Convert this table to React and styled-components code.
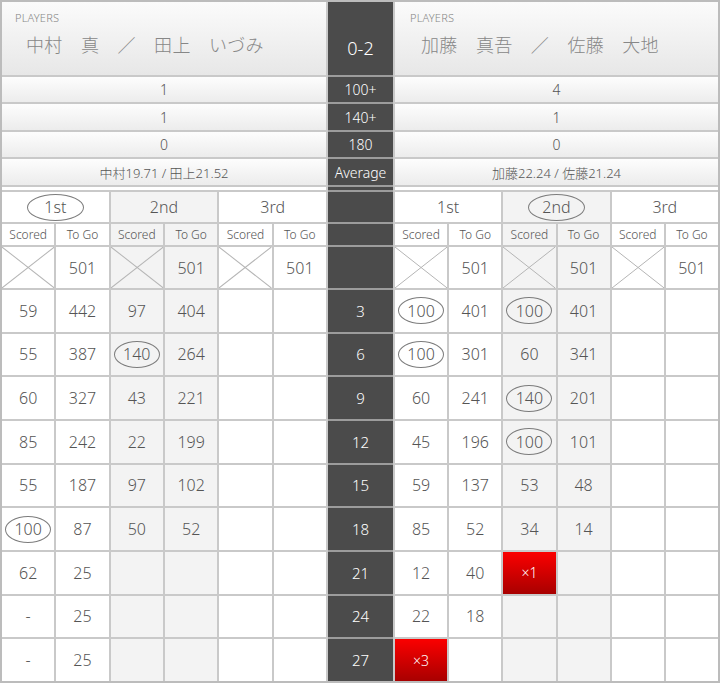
import React from 'react';
import styled, { createGlobalStyle } from 'styled-components';

const GlobalStyle = createGlobalStyle`
  body {
    margin: 0;
    background: #fff;
    font-family: 'Noto Sans', 'Noto Sans CJK JP', sans-serif;
    font-weight: 300;
    color: #555;
  }
`;

const ROWS = '73px 25px 26px 25px 26px 3px 30px 21px 41px repeat(9, 1fr)';

const teams = [
  {
    names: '中村　真　／　田上　いづみ',
    stats: ['1', '1', '0', '中村19.71 / 田上21.52'],
    winner: 0,
    rows: [
      ['59', '442', '97', '404'],
      ['55', '387', { v: '140', ring: true }, '264'],
      ['60', '327', '43', '221'],
      ['85', '242', '22', '199'],
      ['55', '187', '97', '102'],
      [{ v: '100', ring: true }, '87', '50', '52'],
      ['62', '25'],
      ['-', '25'],
      ['-', '25'],
    ],
  },
  {
    names: '加藤　真吾　／　佐藤　大地',
    stats: ['4', '1', '0', '加藤22.24 / 佐藤21.24'],
    winner: 1,
    rows: [
      [{ v: '100', ring: true }, '401', { v: '100', ring: true }, '401'],
      [{ v: '100', ring: true }, '301', '60', '341'],
      ['60', '241', { v: '140', ring: true }, '201'],
      ['45', '196', { v: '100', ring: true }, '101'],
      ['59', '137', '53', '48'],
      ['85', '52', '34', '14'],
      ['12', '40', { v: '×1', bust: true }],
      ['22', '18'],
      [{ v: '×3', bust: true }],
    ],
  },
];

const centerStats = ['100+', '140+', '180', 'Average'];
const darts = [3, 6, 9, 12, 15, 18, 21, 24, 27];

const Board = styled.div`
  box-sizing: border-box;
  width: 720px;
  height: 683px;
  border: 2px solid #bcbcbc;
  background: #c9c9c9;
  display: flex;
  gap: 2px;
`;

const Panel = styled.div`
  flex: 0 0 ${(p) => p.$width}px;
  display: grid;
  grid-template-columns: ${(p) => (p.$center ? '1fr' : 'repeat(6, 1fr)')};
  grid-template-rows: ${ROWS};
  gap: 2px;
  background: ${(p) => (p.$center ? '#9c9c9c' : '#c9c9c9')};
`;

const TeamHeader = styled.div`
  grid-column: span 6;
  background: linear-gradient(#fbfbfb, #e7e7e7);
  padding: 9px 0 0 ${(p) => p.$pad}px;
  color: #878787;
`;

const PlayersLabel = styled.div`
  font-size: 11px;
  line-height: 14px;
  letter-spacing: 0.2px;
`;

const Names = styled.div`
  font-family: 'Noto Sans CJK JP', sans-serif;
  font-weight: 300;
  font-size: 18px;
  letter-spacing: 0.3px;
  line-height: 24px;
  margin: 7px 0 0 11px;
  white-space: nowrap;
`;

const StatRow = styled.div`
  grid-column: span 6;
  background: linear-gradient(#fdfdfd, #ececec);
  display: flex;
  align-items: center;
  justify-content: center;
  font-size: ${(p) => (p.$small ? 13 : 14)}px;
  color: #555;
`;

const Spacer = styled.div`
  grid-column: span 6;
  background: #fff;
`;

const SetHead = styled.div`
  grid-column: span 2;
  background: ${(p) => (p.$alt ? '#f3f3f3' : '#fff')};
  display: flex;
  align-items: center;
  justify-content: center;
  font-size: 16px;
  color: #555;
`;

const Cell = styled.div`
  position: relative;
  background: ${(p) => (p.$alt ? '#f3f3f3' : '#fff')};
  display: flex;
  align-items: center;
  justify-content: center;
  font-size: ${(p) => (p.$sub ? 12 : 16)}px;
  color: #555;
  overflow: hidden;
`;

const Ring = styled.span`
  box-sizing: border-box;
  display: inline-flex;
  align-items: center;
  justify-content: center;
  width: ${(p) => (p.$wide ? 57 : 46)}px;
  height: 27px;
  border: 1px solid #7c7c7c;
  border-radius: 50%;
`;

const Bust = styled.div`
  width: 100%;
  height: 100%;
  display: flex;
  align-items: center;
  justify-content: center;
  background: linear-gradient(#fb0000, #a80000);
  color: #fff;
  font-size: 14px;
`;

const CrossSvg = styled.svg`
  position: absolute;
  inset: 0;
  width: 100%;
  height: 100%;
`;

const DarkCell = styled.div`
  background: #4b4b4b;
  color: #fff;
  display: flex;
  align-items: ${(p) => (p.$low ? 'flex-end' : 'center')};
  justify-content: center;
  padding-bottom: ${(p) => (p.$low ? 15 : 0)}px;
  font-size: ${(p) => p.$size || 15}px;
`;

const Cross = () => (
  <CrossSvg viewBox="0 0 100 100" preserveAspectRatio="none">
    <line x1="0" y1="0" x2="100" y2="100" stroke="#b5b5b5" strokeWidth="1" vectorEffect="non-scaling-stroke" />
    <line x1="100" y1="0" x2="0" y2="100" stroke="#b5b5b5" strokeWidth="1" vectorEffect="non-scaling-stroke" />
  </CrossSvg>
);

const renderValue = (item) => {
  if (!item) return null;
  if (typeof item === 'string') return item;
  if (item.bust) return <Bust>{item.v}</Bust>;
  if (item.ring) return <Ring>{item.v}</Ring>;
  return item.v;
};

const TeamPanel = ({ team, width, pad }) => (
  <Panel $width={width}>
    <TeamHeader $pad={pad}>
      <PlayersLabel>PLAYERS</PlayersLabel>
      <Names>{team.names}</Names>
    </TeamHeader>
    {team.stats.map((s, i) => (
      <StatRow key={i} $small={i === 3}>
        {s}
      </StatRow>
    ))}
    <Spacer />
    {['1st', '2nd', '3rd'].map((label, i) => (
      <SetHead key={label} $alt={i === 1}>
        {team.winner === i ? <Ring $wide>{label}</Ring> : label}
      </SetHead>
    ))}
    {[0, 1, 2].map((i) => (
      <React.Fragment key={i}>
        <Cell $sub $alt={i === 1}>Scored</Cell>
        <Cell $sub $alt={i === 1}>To Go</Cell>
      </React.Fragment>
    ))}
    {[0, 1, 2].map((i) => (
      <React.Fragment key={i}>
        <Cell $alt={i === 1}>
          <Cross />
        </Cell>
        <Cell $alt={i === 1}>501</Cell>
      </React.Fragment>
    ))}
    {team.rows.map((row, r) =>
      [0, 1, 2, 3, 4, 5].map((c) => (
        <Cell key={`${r}-${c}`} $alt={c === 2 || c === 3}>
          {renderValue(row[c])}
        </Cell>
      ))
    )}
  </Panel>
);

export default function App() {
  return (
    <>
      <GlobalStyle />
      <Board>
        <TeamPanel team={teams[0]} width={324} pad={13} />
        <Panel $center $width={65}>
          <DarkCell $low $size={18}>0-2</DarkCell>
          {centerStats.map((s) => (
            <DarkCell key={s} $size={14}>
              {s}
            </DarkCell>
          ))}
          <DarkCell />
          <DarkCell />
          <DarkCell />
          <DarkCell />
          {darts.map((d) => (
            <DarkCell key={d}>{d}</DarkCell>
          ))}
        </Panel>
        <TeamPanel team={teams[1]} width={323} pad={15} />
      </Board>
    </>
  );
}
